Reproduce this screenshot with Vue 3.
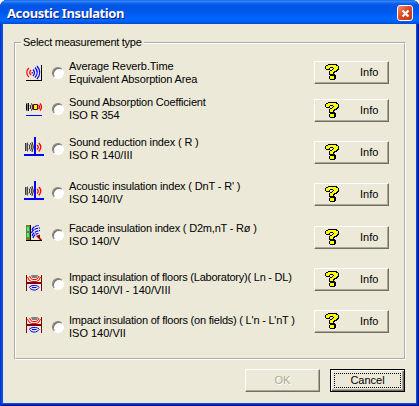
<template>
  <div class="dialog">
    <header class="dialog__titlebar">
      <h1 class="dialog__title">Acoustic Insulation</h1>
      <button class="dialog__close" type="button" aria-label="Close">
        <svg width="9" height="9" viewBox="0 0 9 9">
          <path d="M1.5 1.5 L7.5 7.5 M7.5 1.5 L1.5 7.5" stroke="#fff" stroke-width="2.2" />
        </svg>
      </button>
    </header>

    <main class="dialog__body">
      <fieldset class="group">
        <legend class="group__legend">Select measurement type</legend>

        <div class="group__options">
          <label v-for="option in options" :key="option.id" class="option">
            <svg class="option__icon" width="20" height="26" viewBox="0 0 20 26" fill="none">
              <g v-if="option.icon === 'reverb'">
                <path d="M17.5 5v16M2 20.5h16" stroke="#000" />
                <path d="M4.8 8Q.8 12.5 4.8 17M7 10Q4.5 12.5 7 15" stroke="#f00" stroke-width="1.2" />
                <path d="M8.3 12v1.5" stroke="#a000a0" stroke-width="1.5" />
                <path d="M9 9.5q3 3.2 0 6.5M11 7.5q4.5 5 0 10M13 6q5.5 6.5 0 13" stroke="#00f" stroke-width="1.2" />
              </g>

              <g v-else-if="option.icon === 'absorption'">
                <path d="M2 7h3v8H2z" fill="#808080" />
                <path d="M2.5 8v6M4.5 7v8" stroke="#000" />
                <path d="M6 9q1.8 2 0 4M7.500 7.500q3 3.500 0 7" stroke="#000" />
                <path d="M9.500 8.500h4v5h-4z" fill="#ff0" stroke="#500" />
                <path d="M14.500 9q2 2 0 4M16 7.500q3 3.500 0 7" stroke="#f00" stroke-width="1.3" />
                <path d="M2 19.500h16" stroke="#00f" stroke-width="1.2" />
              </g>

              <g v-else-if="option.icon === 'wall'">
                <path d="M1 7h2v8H1z" fill="#909090" />
                <path d="M1.500 7v8M3.500 6.500v9" stroke="#222" stroke-width=".8" />
                <path d="M5 8.500q1.700 2.500 0 5M6.500 7q2.800 4 0 8M8 6q2.800 5 0 10" stroke="#111" stroke-width=".9" />
                <path d="M11 1v18M0 19h20" stroke="#00f" stroke-width="2" />
                <path d="M13 9q2.500 2 0 4.500M14.800 7q4 4 0 8.500" stroke="#f00" stroke-width="1.3" />
              </g>

              <g v-else-if="option.icon === 'facade'">
                <path d="M2 3h4v15H2z" fill="#808000" />
                <path d="M3 5h2v4H3zM3 11h2v4H3z" fill="#0ff" />
                <path d="M6.500 3v15M2 18.500h16" stroke="#000" />
                <path d="M8 8Q9 4 15 3.500M7.500 11Q9 6.500 16 6M8 14Q9.500 9.500 16 8.500M9 16Q10 12 14.500 11.500" stroke="#00f" stroke-width="1.2" stroke-dasharray="4 .6" />
                <path d="M12 14l4-1.500v3l2 2.500h-2l-2-2z" fill="#a00000" />
              </g>

              <g v-else :transform="option.icon === 'impactField' ? 'translate(0 -1)' : undefined">
                <path d="M2.500 4v16M17.500 4v16" stroke="#800000" />
                <path d="M2 12h16" stroke="#800000" stroke-width="2" />
                <path d="M7 4h7l-1 3h-5z" fill="#808080" />
                <path d="M3.500 6q1 3.800 4 4.500h5q3-.7 4-4.500M5.500 5q1 3 3 3.500h3.500q2-.5 3-3.500" stroke="#f00" />
                <path d="M5 16.500q2-2 4-2h2.500q2 0 4 2M8 16.500h4.500M6 17.500l3 1.500h2.500l3-1.500" stroke="#00f" />
              </g>
            </svg>
            <input v-model="selected" class="option__radio" type="radio" name="measurement" :value="option.id" />
            <span class="option__text">
              <span
                v-for="line in option.lines"
                :key="line.text"
                class="option__line"
                :style="{ letterSpacing: line.spacing + 'px' }"
              >{{ line.text }}</span>
            </span>
          </label>
        </div>

        <div class="group__buttons">
          <button v-for="option in options" :key="option.id" class="button button--info" type="button">
            <svg class="button__help" width="14" height="16" viewBox="0 0 14 16" shape-rendering="crispEdges">
              <rect
                v-for="p in helpPixels"
                :key="p.x + '-' + p.y"
                :x="p.x"
                :y="p.y"
                width="1"
                height="1"
                :fill="p.fill"
              />
            </svg>
            <span>Info</span>
          </button>
        </div>
      </fieldset>

      <footer class="dialog__footer">
        <button class="button" type="button" :disabled="!selected">OK</button>
        <button class="button button--default" type="button">
          <span class="button__focus">Cancel</span>
        </button>
      </footer>
    </main>
  </div>
</template>

<script setup>
import { ref } from 'vue'

const selected = ref(null)

const options = [
  {
    id: 'reverb',
    icon: 'reverb',
    lines: [
      { text: 'Average Reverb.Time', spacing: -0.1 },
      { text: 'Equivalent Absorption Area', spacing: -0.15 }
    ]
  },
  {
    id: 'absorption',
    icon: 'absorption',
    lines: [
      { text: 'Sound Absorption Coefficient', spacing: -0.18 },
      { text: 'ISO R 354', spacing: -0.1 }
    ]
  },
  {
    id: 'reduction',
    icon: 'wall',
    lines: [
      { text: 'Sound reduction index ( R )', spacing: -0.16 },
      { text: 'ISO R 140/III', spacing: 0 }
    ]
  },
  {
    id: 'insulation',
    icon: 'wall',
    lines: [
      { text: "Acoustic insulation index ( DnT - R' )", spacing: -0.16 },
      { text: 'ISO 140/IV', spacing: 0 }
    ]
  },
  {
    id: 'facade',
    icon: 'facade',
    lines: [
      { text: 'Facade insulation index ( D2m,nT - Rø )', spacing: -0.2 },
      { text: 'ISO 140/V', spacing: 0 }
    ]
  },
  {
    id: 'impact-lab',
    icon: 'impact',
    lines: [
      { text: 'Impact insulation of floors (Laboratory)( Ln - DL)', spacing: -0.23 },
      { text: 'ISO 140/VI - 140/VIII', spacing: 0 }
    ]
  },
  {
    id: 'impact-field',
    icon: 'impactField',
    lines: [
      { text: "Impact insulation of floors (on fields) ( L'n - L'nT )", spacing: -0.22 },
      { text: 'ISO 140/VII', spacing: 0 }
    ]
  }
]

// Question mark bitmap: K = outline, Y = fill
const helpBitmap = [
  '...KKKKKKKKK..',
  '.KKYYYYYYYYKK.',
  'KYYYYYYYYYYYYK',
  'KYYYYKKKYYYYYK',
  'KYYYK...KYYYYK',
  '.KKKK..KYYYYKK',
  '.....KKYYYYKK.',
  '....KYYYYKKK..',
  '....KYYYKK....',
  '....KYYYK.....',
  '....KKKKKK....',
  '.....KKKKKK...',
  '....KYYYYKK...',
  '....KYYYYKK...',
  '....KYYYYKK...',
  '.....KKKKK....'
]

const helpPixels = helpBitmap.flatMap((row, y) =>
  [...row]
    .map((c, x) => ({ x, y, c, fill: c === 'K' ? '#000' : '#ff0' }))
    .filter((p) => p.c !== '.')
)
</script>

<style>
body {
  background: #fff;
}
</style>

<style scoped>
.dialog {
  width: 419px;
  height: 406px;
  box-sizing: border-box;
  display: flex;
  flex-direction: column;
  padding: 0 3px 3px;
  border-radius: 7px 7px 0 0;
  background: #0a4be0;
  box-shadow: inset 1px 0 #0831d9, inset -1px -1px #00138c, inset -2px -2px #0030c0;
  font-family: "Liberation Sans", Arial, sans-serif;
  font-size: 11px;
  line-height: 13px;
  color: #000;
  overflow: hidden;
}

.dialog__titlebar {
  flex: none;
  height: 24px;
  box-sizing: border-box;
  margin: 0 -3px;
  padding: 2px 6px 0 7px;
  display: flex;
  align-items: center;
  justify-content: space-between;
  background: linear-gradient(
    #0058d8 0,
    #3a90ff 1px,
    #2678f8 2px,
    #0a5ce8 4px,
    #0054e4 7px,
    #0058ec 12px,
    #0066ff 18px,
    #0064fa 21px,
    #0048d0 24px
  );
}

.dialog__title {
  margin: 0;
  font-family: "Noto Sans", "Open Sans", sans-serif;
  font-size: 13px;
  line-height: 16px;
  font-weight: 700;
  letter-spacing: -0.4px;
  color: #fff;
  text-shadow: 1px 1px #0a1883;
  white-space: nowrap;
}

.dialog__close {
  width: 16px;
  height: 16px;
  padding: 0;
  display: flex;
  align-items: center;
  justify-content: center;
  border: 1px solid #fff;
  border-radius: 3px;
  background: linear-gradient(135deg, #f09078, #e04a24 45%, #c03408);
}

.dialog__body {
  flex: 1;
  display: flex;
  flex-direction: column;
  padding: 12px 11px 11px;
  background: #ece9d8;
}

.group {
  height: 324px;
  box-sizing: border-box;
  margin: 0 -1px 0 0;
  padding: 11px 15px 0 8px;
  min-width: 0;
  display: grid;
  grid-template-columns: 289px 75px;
  justify-content: space-between;
  align-content: start;
  border: 2px groove #fff;
}

.group__legend {
  margin-left: -3px;
  padding: 0 2px;
  letter-spacing: -0.27px;
  white-space: nowrap;
}

.group__options {
  display: grid;
  grid-template-rows: 36px 40px 44px 42px 49px 43px 26px;
}

.group__buttons {
  display: grid;
  grid-template-rows: 38px 42px 42px 43px 42px 42px 23px;
  padding-top: 1px;
}

.option {
  display: flex;
  align-items: center;
  height: 26px;
}

.option__icon {
  flex: none;
}

.option__radio {
  appearance: none;
  flex: none;
  width: 12px;
  height: 12px;
  margin: 0 5px 0 8px;
  border: 1px solid;
  border-color: #808074 #fff #fff #808074;
  border-radius: 50%;
  background: #fff;
  box-shadow: inset 1px 1px #716f64;
}

.option__text {
  display: flex;
  flex-direction: column;
}

.option__line {
  white-space: pre;
}

.button {
  width: 75px;
  height: 23px;
  box-sizing: border-box;
  padding: 0;
  display: flex;
  align-items: center;
  justify-content: center;
  border: 1px solid;
  border-color: #fff #716f64 #716f64 #fff;
  border-radius: 0;
  background: #ece9d8;
  box-shadow: inset -1px -1px #aca899;
  font: inherit;
  color: #000;
}

.button:disabled {
  color: #aca899;
  text-shadow: 1px 1px #fff;
}

.button--info {
  justify-content: flex-start;
  padding-left: 10px;
  gap: 21px;
}

.button__help {
  flex: none;
  margin-top: -1px;
}

.button--default {
  padding: 3px;
  border-color: #000;
  box-shadow: inset 1px 1px #fff, inset -1px -1px #716f64, inset -2px -2px #aca899;
}

.button__focus {
  flex: 1;
  height: 13px;
  border: 1px dotted #000;
}

.dialog__footer {
  display: flex;
  justify-content: flex-end;
  gap: 10px;
  margin-top: 9px;
}
</style>
